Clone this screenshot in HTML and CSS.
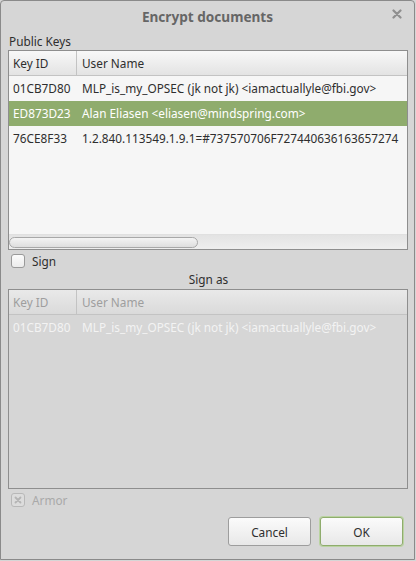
FILE: index.html
```html
<!DOCTYPE html>
<html>
<head>
<meta charset="utf-8">
<link rel="stylesheet" href="styles.css">
</head>
<body>
<div class="window">
  <div class="titlebar">
    <span class="title">Encrypt documents</span>
    <span class="close"><svg width="10" height="10" viewBox="0 0 10 10"><path d="M1.5 1.5 L8.5 8.5 M8.5 1.5 L1.5 8.5" stroke="#8f8f8f" stroke-width="2.2" stroke-linecap="round"/></svg></span>
  </div>
  <div class="content">
    <div class="label">Public Keys</div>
    <div class="table">
      <div class="thead">
        <div class="c1">Key ID</div>
        <div class="c2">User Name</div>
      </div>
      <div class="tbody">
        <div class="row"><div class="c1">01CB7D80</div><div class="c2">MLP_is_my_OPSEC (jk not jk) &lt;iamactuallyle@fbi.gov&gt;</div></div>
        <div class="row selected"><div class="c1">ED873D23</div><div class="c2">Alan Eliasen &lt;eliasen@mindspring.com&gt;</div></div>
        <div class="row"><div class="c1">76CE8F33</div><div class="c2">1.2.840.113549.1.9.1=#737570706F727440636163657274</div></div>
      </div>
      <div class="hscroll"><div class="thumb"></div></div>
    </div>
    <div class="check-row">
      <span class="checkbox"></span><span>Sign</span>
    </div>
    <div class="label center">Sign as</div>
    <div class="table disabled">
      <div class="thead">
        <div class="c1">Key ID</div>
        <div class="c2">User Name</div>
      </div>
      <div class="tbody">
        <div class="row"><div class="c1">01CB7D80</div><div class="c2">MLP_is_my_OPSEC (jk not jk) &lt;iamactuallyle@fbi.gov&gt;</div></div>
      </div>
    </div>
    <div class="check-row disabled">
      <span class="checkbox checked"><svg width="8" height="8" viewBox="0 0 8 8"><path d="M1.5 1.5 L6.5 6.5 M6.5 1.5 L1.5 6.5" stroke="#b4b4b4" stroke-width="1.8" stroke-linecap="round"/></svg></span><span>Armor</span>
    </div>
    <div class="buttons">
      <button class="btn">Cancel</button>
      <button class="btn default">OK</button>
    </div>
  </div>
</div>
</body>
</html>
```

FILE: styles.css
```css
html, body {
  margin: 0;
  padding: 0;
  background: #d6d6d6;
}
body {
  font-family: "Noto Sans", "Open Sans", sans-serif;
  font-size: 11.8px;
  color: #2e2e2e;
}
.window {
  width: 413px;
  height: 558px;
  border: 1px solid #8a8a8a;
  border-radius: 4px 4px 0 0;
  background: #d6d6d6;
  display: flex;
  flex-direction: column;
}
.titlebar {
  height: 31px;
  display: flex;
  align-items: center;
  justify-content: center;
  position: relative;
  flex: none;
}
.title {
  font-weight: bold;
  font-size: 13.6px;
  color: #666666;
  margin-top: -1px;
}
.close {
  position: absolute;
  left: 391px;
  top: 8px;
  display: flex;
}
.content {
  padding: 0 6px 0 7px;
  display: flex;
  flex-direction: column;
}
.label {
  height: 18px;
  line-height: 18px;
  padding-left: 1px;
}
.label.center {
  text-align: center;
  height: 18px;
  line-height: 17px;
}
.table {
  height: 198px;
  border: 1px solid #8e8e8e;
  background: #f6f6f6;
  display: flex;
  flex-direction: column;
  overflow: hidden;
  flex: none;
}
.thead {
  display: flex;
  height: 24px;
  border-bottom: 1px solid #c3c3c3;
  background: linear-gradient(#f8f8f8, #e3e3e3);
  flex: none;
}
.thead .c1 {
  border-right: 1px solid #c3c3c3;
}
.c1 {
  width: 63px;
  padding-left: 4px;
  flex: none;
  line-height: 24px;
}
.c2 {
  padding-left: 5px;
  white-space: nowrap;
  line-height: 24px;
}
.tbody {
  flex: 1;
}
.row {
  display: flex;
  height: 25px;
  white-space: nowrap;
}
.row .c1 { width: 64px; line-height: 25px; }
.row .c2 { line-height: 25px; }
.row.selected {
  background: #8fac6d;
  color: #ffffff;
}
.hscroll {
  height: 14px;
  flex: none;
  background: linear-gradient(#e3e3e3, #eeeeee);
  border-top: 1px solid #e0e0e0;
  display: flex;
  align-items: center;
}
.thumb {
  width: 187px;
  height: 9px;
  border: 1px solid #a8a8a8;
  border-radius: 6px;
  background: linear-gradient(#f4f4f4, #dedede);
}
.check-row {
  height: 21px;
  display: flex;
  align-items: center;
  gap: 7px;
  padding-left: 3px;
  flex: none;
}
.checkbox {
  width: 12px;
  height: 12px;
  border: 1px solid #9a9a9a;
  border-radius: 3px;
  background: linear-gradient(#fbfbfb, #ececec);
  display: flex;
  align-items: center;
  justify-content: center;
}
.check-row.disabled {
  color: #a9a9a9;
}
.check-row.disabled .checkbox {
  border-color: #b8b8b8;
  background: #dcdcdc;
}
.table.disabled {
  background: #d6d6d6;
}
.table.disabled .thead {
  color: #9e9e9e;
  background: linear-gradient(#e9e9e9, #dadada);
}
.table.disabled .row {
  color: #f3f3f3;
}
.buttons {
  display: flex;
  justify-content: flex-end;
  gap: 9px;
  margin-top: 7px;
  padding-right: 5px;
}
.btn {
  font-family: inherit;
  font-size: 11.8px;
  color: #2e2e2e;
  width: 83px;
  height: 29px;
  border: 1px solid #9d9d9d;
  border-radius: 3px;
  background: linear-gradient(#fbfbfb, #e8e8e8);
  padding: 0;
}
.btn.default {
  border: 1px solid #8fac6d;
  box-shadow: 0 0 0 1px #b9d3a0;
}
```
